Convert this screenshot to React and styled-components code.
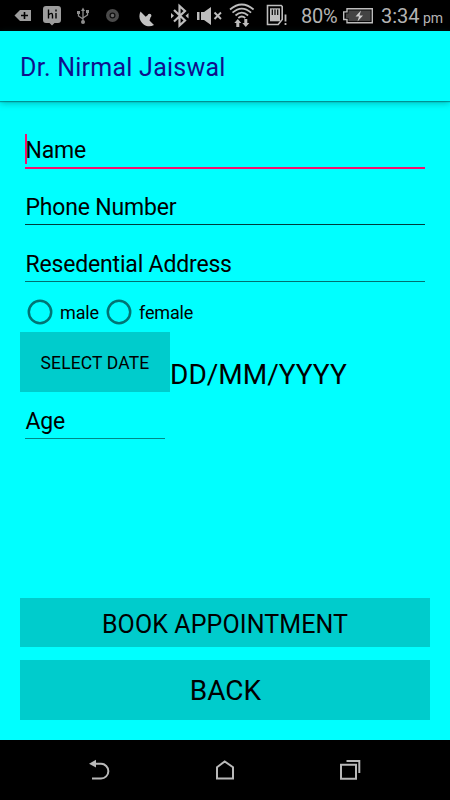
import React from "react";
import styled, { createGlobalStyle } from "styled-components";

const GlobalStyle = createGlobalStyle`
  * { box-sizing: border-box; }
  body { margin: 0; background: #000; font-family: Roboto, "Noto Sans", sans-serif; }
  button, input { font-family: inherit; }
`;

const Screen = styled.div`
  width: 450px;
  height: 800px;
  display: flex;
  flex-direction: column;
  background: #00ffff;
  color: #000;
  overflow: hidden;
`;

const StatusBar = styled.header`
  height: 31px;
  flex: none;
  display: flex;
  align-items: flex-start;
  background: #000;
  color: #b4b4b4;
`;

const StatusIcon = styled.svg`
  display: block;
  flex: none;
  height: 31px;
  width: ${(p) => p.$w}px;
  margin-left: ${(p) => p.$gap}px;
`;

const StatusText = styled.span`
  flex: none;
  width: ${(p) => p.$w}px;
  margin-left: ${(p) => p.$gap}px;
  font-size: ${(p) => p.$size}px;
  letter-spacing: ${(p) => p.$track || 0}px;
  line-height: ${(p) => p.$line}px;
  white-space: nowrap;
`;

const AppBar = styled.div`
  height: 70px;
  flex: none;
  display: flex;
  align-items: center;
  padding: 4px 20px 0;
  box-shadow: 0 1px 1px rgba(0, 70, 70, 0.45), 0 2px 7px rgba(0, 80, 80, 0.4);
`;

const Title = styled.h1`
  margin: 0;
  font-size: 25px;
  font-weight: 400;
  letter-spacing: 0.25px;
  line-height: 30px;
  color: #10108c;
`;

const Form = styled.main`
  flex: 1;
  display: flex;
  flex-direction: column;
  align-items: flex-start;
  padding: 32px 20px 20px;
`;

const Field = styled.label`
  display: flex;
  align-items: flex-end;
  width: ${(p) => p.$w || 400}px;
  height: ${(p) => p.$h}px;
  margin-left: 5px;
  padding-bottom: 3px;
  border-bottom: ${(p) => (p.$active ? "2px solid #f5106e" : "1px solid " + (p.$line || "#005a5a"))};
`;

const Caret = styled.span`
  width: 2px;
  height: 30px;
  margin-right: -2px;
  background: #f5106e;
`;

const FieldText = styled.span`
  padding-left: 0.5px;
  font-size: 23px;
  line-height: 26px;
  letter-spacing: -0.18px;
  white-space: nowrap;
`;

const RadioRow = styled.div`
  display: flex;
  height: 50px;
  align-items: center;
  padding: 10px 0 0 7px;
`;

const RadioRing = styled.svg`
  width: 26px;
  height: 26px;
  fill: none;
  stroke: #007474;
  stroke-width: 2.5;
`;

const RadioLabel = styled.span`
  width: ${(p) => p.$w}px;
  padding: 1px 0 0 7px;
  font-size: 18px;
  line-height: 22px;
  letter-spacing: -0.15px;
`;

const DateRow = styled.div`
  display: flex;
  height: 60px;
`;

const Button = styled.button`
  flex: none;
  width: ${(p) => p.$w}px;
  height: ${(p) => p.$h}px;
  margin: ${(p) => p.$margin || 0};
  padding: ${(p) => p.$pad || "2px 0 0"};
  border: 0;
  background: #00cccc;
  color: #000;
  font-size: ${(p) => p.$size}px;
  letter-spacing: ${(p) => p.$track || 0}px;
`;

const DateValue = styled.span`
  padding-top: 26px;
  font-size: 28px;
  line-height: 34px;
`;

const NavBar = styled.nav`
  flex: none;
  height: 60px;
  display: grid;
  grid-template-columns: 125px 125px 125px;
  justify-content: center;
  justify-items: center;
  background: #000;
`;

const NavIcon = styled.svg`
  width: 26px;
  height: 60px;
  fill: none;
  stroke: #b9b9b9;
  stroke-width: 2;
`;

function StatusIcons() {
  return (
    <>
      <StatusIcon $w={18} $gap={14} viewBox="14 0 18 31">
        <path d="M14.5 15.5 20 10h11v11H20Z" fill="#9c9c9c" />
        <path d="M21 15.5h7M24.5 12v7" stroke="#000" strokeWidth="1.6" />
      </StatusIcon>
      <StatusIcon $w={18} $gap={11} viewBox="43 0 18 31">
        <path d="M46 6h12q3 0 3 3v11q0 3-3 3h-3.500l-2.500 2.500-2.500-2.500H46q-3 0-3-3V9q0-3 3-3Z" fill="#9c9c9c" />
        <path d="M48.500 9.500v9M48.500 15q4-3.500 4 .5v3M56 13v5.500M56 9.500v2" fill="none" stroke="#000" strokeWidth="1.400" />
      </StatusIcon>
      <StatusIcon $w={14} $gap={15} viewBox="76 0 14 31">
        <path d="M83 9v13M83 19l-4.500-3v-3M83 18l4.500-3v-3" fill="none" stroke="#8e8e8e" strokeWidth="1.300" />
        <path d="m83 7.500 2 3.500h-4ZM77 11h3v3h-3ZM86 10h3v3h-3Z" fill="#8e8e8e" />
        <circle cx="83" cy="22" r="2" fill="#8e8e8e" />
      </StatusIcon>
      <StatusIcon $w={14} $gap={15} viewBox="105 0 14 31">
        <circle cx="112.500" cy="15.500" r="6.500" fill="#4b4b4b" />
        <circle cx="112.500" cy="15.500" r="2.400" fill="#6b6b6b" stroke="#111" strokeWidth="1.300" />
      </StatusIcon>
      <StatusIcon $w={16} $gap={20} viewBox="139 0 16 31">
        <path d="M140.500 11.500C138 17 140 22 144 24.700C147.500 26.800 151 26.500 154 25L149.500 20.500L150.500 17.500L147.500 15.300L145.700 16.700Z" fill="#c2c2c2" />
        <circle cx="149.500" cy="15.700" r="1.900" fill="#c2c2c2" />
      </StatusIcon>
      <StatusIcon $w={18} $gap={16} viewBox="171 0 18 31">
        <path d="m174 10 11 10.500-5.500 5V6l5.500 5-11 10.500" fill="none" stroke="#bdbdbd" strokeWidth="2.200" />
        <path d="m171 13 3 2.800-3 2.800ZM188.500 13l-3 2.800 3 2.800Z" fill="#bdbdbd" />
      </StatusIcon>
      <StatusIcon $w={26} $gap={8} viewBox="197 0 26 31">
        <path d="M197 12h2.500v8H197ZM201 12h3l7-5v18l-7-5h-3Z" fill="#bdbdbd" />
        <path d="m214.500 12.500 6.500 6.500M221 12.500l-6.500 6.500" stroke="#bdbdbd" strokeWidth="1.900" />
      </StatusIcon>
      <StatusIcon $w={26} $gap={6} viewBox="229 0 26 31">
        <path d="M230 9.500q11.800-10 23.600 0M232.500 12.700q9.300-8.200 18.600 0M235.500 15.500q6.300-5.600 12.600 0M238.300 18q3.500-3 7 0" fill="none" stroke="#bdbdbd" strokeWidth="1.700" />
        <path d="m234.300 23 3.500-4 3.500 4h-2v4h-3v-4ZM242.300 23h2v-4h3v4h2l-3.500 4Z" fill="#bdbdbd" />
      </StatusIcon>
      <StatusIcon $w={22} $gap={11} viewBox="266 0 22 31">
        <path d="M267.500 5.500h13.700l1 1v13l-4 5h-10.700Z" fill="none" stroke="#bdbdbd" strokeWidth="1.600" />
        <path d="M270 8.300h10v13h-10Z" fill="#bdbdbd" />
        <path d="M272.300 9.500v5.500M275 9.500v5.500M277.700 9.500v5.500" stroke="#000" strokeWidth="1.200" />
        <path d="M285.500 14.500v7M285.500 23v2" stroke="#bdbdbd" strokeWidth="1.800" />
      </StatusIcon>
    </>
  );
}

function Ring() {
  return (
    <RadioRing viewBox="0 0 26 26">
      <circle cx="13" cy="13" r="11.200" />
    </RadioRing>
  );
}

export default function App() {
  return (
    <>
      <GlobalStyle />
      <Screen>
        <StatusBar>
          <StatusIcons />
          <StatusText $w={37} $gap={13} $size={20} $line={32} $track={-0.2}>80%</StatusText>
          <StatusIcon $w={31} $gap={5} viewBox="343 0 31 31">
            <path d="M347 8.700h25.300v14H347v-3.200h-3.300v-7.600h3.300Z" fill="#080808" stroke="#bdbdbd" strokeWidth="1.400" />
            <path d="M348.500 10.500h22v10.500h-22v-3h-2.500v-4.500h2.500Z" fill="#444" />
            <path d="m361 10.500-5.500 6h3.500l-1.500 5 5.500-6h-3.500Z" fill="#d0d0d0" />
          </StatusIcon>
          <StatusText $w={42} $gap={7} $size={20} $line={32}>3:34</StatusText>
          <StatusText $w={22} $gap={0} $size={14} $line={36}>pm</StatusText>
        </StatusBar>
        <AppBar>
          <Title>Dr. Nirmal Jaiswal</Title>
        </AppBar>
        <Form>
          <Field $active $h={36}>
            <Caret />
            <FieldText>Name</FieldText>
          </Field>
          <Field $h={56} $line="#003c3c">
            <FieldText>Phone Number</FieldText>
          </Field>
          <Field $h={57} $line="#007070">
            <FieldText>Resedential Address</FieldText>
          </Field>
          <RadioRow>
            <Ring />
            <RadioLabel $w={53}>male</RadioLabel>
            <Ring />
            <RadioLabel $w={70}>female</RadioLabel>
          </RadioRow>
          <DateRow>
            <Button $w={150} $h={60} $size={17.5} $track={0.15}>SELECT DATE</Button>
            <DateValue>DD/MM/YYYY</DateValue>
          </DateRow>
          <Field $w={140} $h={47} $line="#008888">
            <FieldText>Age</FieldText>
          </Field>
          <Button $w={410} $h={49} $size={25} $track={0.1} $pad="3px 0 0" $margin="auto 0 13px">BOOK APPOINTMENT</Button>
          <Button $w={410} $h={60} $size={28} $pad="1px 0 0 1px">BACK</Button>
        </Form>
        <NavBar>
          <NavIcon viewBox="87 740 26 60">
            <path d="M92 763.800h9a7.300 7.300 0 0 1 0 14.700h-9" />
            <path d="m89 763.800 7-4v7.800Z" fill="#b9b9b9" stroke="none" />
          </NavIcon>
          <NavIcon viewBox="212 740 26 60">
            <path d="M217 767.200 224.700 761.500 233 767.200V778.500H217Z" />
          </NavIcon>
          <NavIcon viewBox="337 740 26 60">
            <path d="M341 764.700h15v14H341Z" />
            <path d="M346.500 761h12.800v12" />
          </NavIcon>
        </NavBar>
      </Screen>
    </>
  );
}
